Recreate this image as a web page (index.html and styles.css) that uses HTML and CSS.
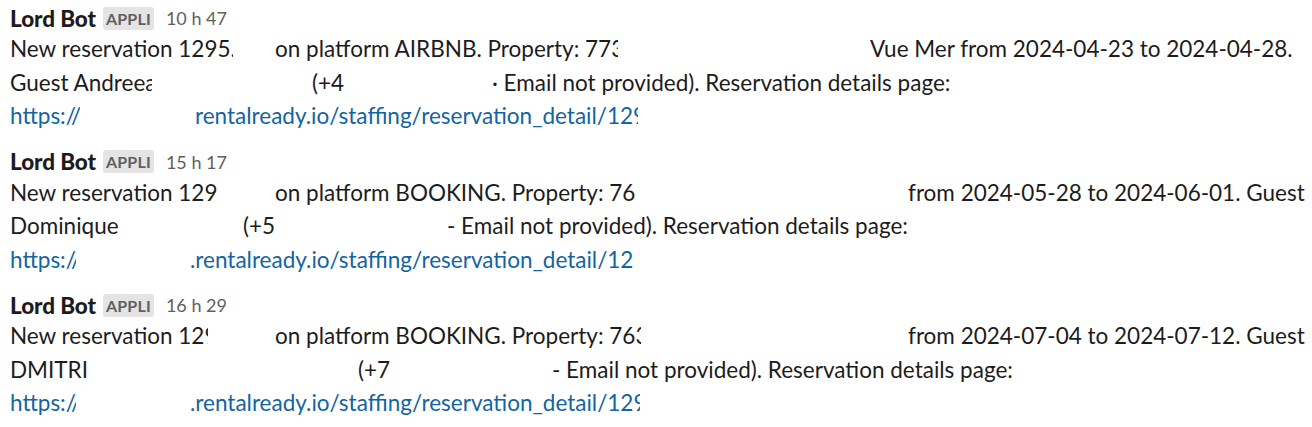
FILE: index.html
```html
<!DOCTYPE html>
<html lang="en">
<head>
    <meta charset="UTF-8">
    <title>Lord Bot - reservations</title>
    <link rel="stylesheet" href="styles.css">
</head>
<body>
    <div class="feed">
        <div class="message">
            <div class="message-header">
                <span class="sender">Lord Bot</span>
                <span class="app-badge">APPLI</span>
                <span class="time">10 h 47</span>
            </div>
            <div class="line">
                <span class="seg w265"><span class="seg w223">New reservation 1295.</span></span><span class="seg w595"><span class="seg w343">on platform AIRBNB. Property: 773</span></span><span>Vue Mer from 2024-04-23 to 2024-04-28.</span>
            </div>
            <div class="line">
                <span class="seg w302"><span class="seg w142">Guest Andreea</span></span><span class="seg w180">(+4</span><span>· Email not provided). Reservation details page:</span>
            </div>
            <div class="line">
                <a class="link" href="#"><span class="seg w185"><span class="seg w70">https://</span></span><span class="seg w443">rentalready.io/staffing/reservation_detail/129</span></a>
            </div>
        </div>

        <div class="message">
            <div class="message-header">
                <span class="sender">Lord Bot</span>
                <span class="app-badge">APPLI</span>
                <span class="time">15 h 17</span>
            </div>
            <div class="line">
                <span class="seg w265">New reservation 129</span><span class="seg w633">on platform BOOKING. Property: 76</span><span>from 2024-05-28 to 2024-06-01. Guest</span>
            </div>
            <div class="line">
                <span class="seg w233">Dominique</span><span class="seg w204">(+5</span><span>- Email not provided). Reservation details page:</span>
            </div>
            <div class="line">
                <a class="link" href="#"><span class="seg w180"><span class="seg w66">https://</span></span><span>.rentalready.io/staffing/reservation_detail/12</span></a>
            </div>
        </div>

        <div class="message">
            <div class="message-header">
                <span class="sender">Lord Bot</span>
                <span class="app-badge">APPLI</span>
                <span class="time">16 h 29</span>
            </div>
            <div class="line">
                <span class="seg w265"><span class="seg w198">New reservation 129</span></span><span class="seg w633"><span class="seg w366">on platform BOOKING. Property: 763</span></span><span>from 2024-07-04 to 2024-07-12. Guest</span>
            </div>
            <div class="line">
                <span class="seg w348">DMITRI</span><span class="seg w194">(+7</span><span>- Email not provided). Reservation details page:</span>
            </div>
            <div class="line">
                <a class="link" href="#"><span class="seg w180"><span class="seg w66">https://</span></span><span class="seg w450">.rentalready.io/staffing/reservation_detail/129</span></a>
            </div>
        </div>
    </div>
</body>
</html>
```

FILE: styles.css
```css
* {
    margin: 0;
    padding: 0;
    box-sizing: border-box;
}

body {
    font-family: Lato, "Liberation Sans", sans-serif;
    background: #ffffff;
    color: #1d1c1d;
    width: 1312px;
    overflow: hidden;
}

.feed {
    padding: 4px 10px 0;
}

.message {
    padding-bottom: 15px;
}

.message-header {
    display: flex;
    align-items: center;
    height: 28px;
}

.sender {
    font-size: 22.5px;
    font-weight: 900;
    letter-spacing: -0.1px;
}

.app-badge {
    margin-left: 7px;
    background: #e4e4e4;
    color: #616061;
    font-size: 16px;
    font-weight: 700;
    padding: 0 3px;
    height: 23px;
    line-height: 23px;
    border-radius: 3px;
    letter-spacing: 0.2px;
}

.time {
    margin-left: 12px;
    font-size: 18px;
    color: #616061;
}

.line {
    font-size: 22.5px;
    line-height: 33.5px;
    white-space: nowrap;
}

.link {
    color: #1264a3;
    text-decoration: none;
}

/* fixed-width segments keep the hidden parts of each message blank */
.seg {
    display: inline-block;
    overflow: hidden;
    vertical-align: top;
}

.w66 { width: 66px; }
.w70 { width: 70px; }
.w142 { width: 142px; }
.w180 { width: 180px; }
.w185 { width: 185px; }
.w194 { width: 194px; }
.w198 { width: 198px; }
.w204 { width: 204px; }
.w223 { width: 223px; }
.w233 { width: 233px; }
.w265 { width: 265px; }
.w302 { width: 302px; }
.w343 { width: 343px; }
.w348 { width: 348px; }
.w366 { width: 366px; }
.w443 { width: 443px; }
.w450 { width: 450px; }
.w595 { width: 595px; }
.w633 { width: 633px; }
```
